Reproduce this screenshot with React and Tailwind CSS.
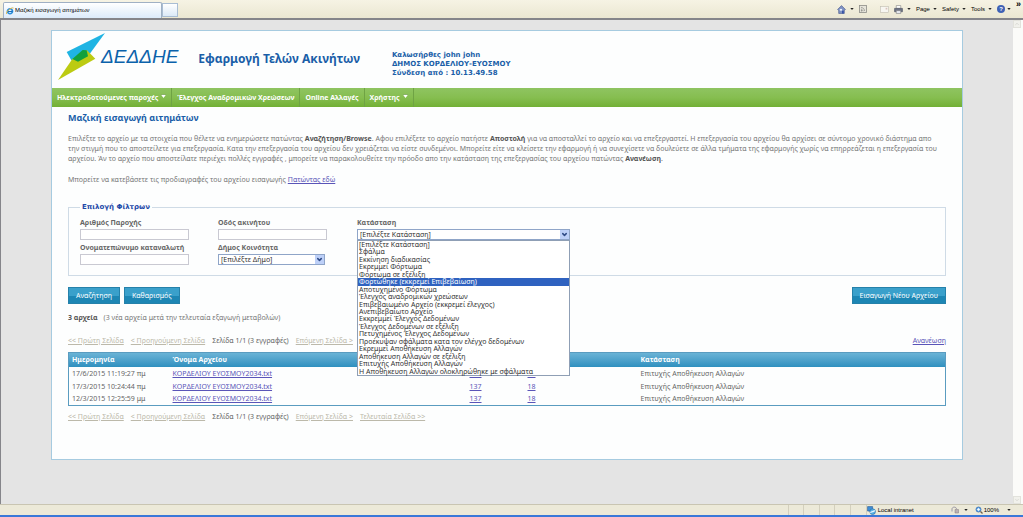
import React from "react";
import { ChevronDown } from "lucide-react";

const menuItems = [
  { label: "Ηλεκτροδοτούμενες παροχές", arrow: true },
  { label: "Έλεγχος Αναδρομικών Χρεώσεων" },
  { label: "Online Αλλαγές" },
  { label: "Χρήστης", arrow: true },
];

const statuses = [
  "[Επιλέξτε Κατάσταση]",
  "Σφάλμα",
  "Εκκίνηση διαδικασίας",
  "Εκρεμμεί Φόρτωμα",
  "Φόρτωμα σε εξέλιξη",
  "Φορτώθηκε (εκκρεμεί Επιβεβαίωση)",
  "Αποτυχημένο Φόρτωμα",
  "Έλεγχος αναδρομικών χρεώσεων",
  "Επιβεβαιωμένο Αρχείο (εκκρεμεί έλεγχος)",
  "Ανεπιβεβαίωτο Αρχείο",
  "Εκκρεμμεί Έλεγχος Δεδομένων",
  "Έλεγχος Δεδομένων σε εξέλιξη",
  "Πετυχημένος Έλεγχος Δεδομένων",
  "Προέκυψαν σφάλματα κατα τον ελέγχο δεδομένων",
  "Εκρεμμεί Αποθήκευση Αλλαγών",
  "Αποθήκευση Αλλαγών σε εξέλιξη",
  "Επιτυχής Αποθήκευση Αλλαγών",
  "Η Αποθήκευση Αλλαγών ολοκληρώθηκε με σφάλματα",
];

const files = [
  { date: "17/6/2015 11:19:27 πμ", name: "ΚΟΡΔΕΛΙΟΥ ΕΥΟΣΜΟΥ2034.txt", total: 137, errors: 18 },
  { date: "17/3/2015 10:24:44 πμ", name: "ΚΟΡΔΕΛΙΟΥ ΕΥΟΣΜΟΥ2034.txt", total: 137, errors: 18 },
  { date: "12/3/2015 12:25:59 μμ", name: "ΚΟΡΔΕΛΙΟΥ ΕΥΟΣΜΟΥ2034.txt", total: 137, errors: 18 },
];

function Caret() {
  return (
    <svg viewBox="0 0 5 3" className="h-[2px] w-[4px]" aria-hidden="true">
      <path d="M0 0h5L2.5 3z" fill="#222" />
    </svg>
  );
}

function IeLogo() {
  return (
    <svg viewBox="0 0 16 16" className="h-2 w-2 shrink-0" aria-hidden="true">
      <circle cx="8" cy="8.5" r="5" fill="#fff" stroke="#2b8fdc" strokeWidth="3.4" />
      <path d="M4 9h9" stroke="#1b6fc0" strokeWidth="2.4" />
      <path d="M1 14C-1 10 10 0 15 2" fill="none" stroke="#e3b53a" strokeWidth="1.8" />
    </svg>
  );
}

function TabBar() {
  return (
    <header className="flex h-[18px] items-stretch bg-linear-to-b from-[#f6f3e4] to-[#ebe7d2] font-['Liberation_Sans',sans-serif] text-[6px] text-black">
      <div className="mt-[2px] ml-[3px] flex w-[159px] items-center gap-[1px] rounded-t-xs border border-b-0 border-[#9fb0c4] bg-linear-to-b from-white to-[#dcebfa] px-[2px]">
        <IeLogo />
        <span>Μαζική εισαγωγή αιτημάτων</span>
      </div>
      <button
        type="button"
        aria-label="New tab"
        className="mt-[3px] mb-[1px] w-4 border border-[#a9bdd4] bg-linear-to-b from-white to-[#dbe9f8]"
      />
      <div className="ml-auto flex items-center gap-[5px] pr-[2px]">
        <button type="button" aria-label="Home" className="flex items-center gap-1">
          <svg viewBox="0 0 16 16" className="h-[9px] w-[9px]">
            <path d="M1 8L8 1l7 7-2 1v6H3V9z" fill="#7f93c4" stroke="#3d4f86" />
            <path d="M5 7h4v3H5z" fill="#e9effc" />
            <path d="M9 10h3v5H9z" fill="#3450a4" />
          </svg>
          <Caret />
        </button>
        <button type="button" aria-label="Feeds">
          <svg viewBox="0 0 16 16" className="h-2 w-2">
            <rect x="1" y="1" width="14" height="14" fill="#e6e4da" stroke="#8d8d88" strokeWidth="1.6" />
            <path d="M4 5c4 0 7 3 7 7M4 8.500c2 0 4 2 4 4" fill="none" stroke="#8d8d88" strokeWidth="1.5" />
            <circle cx="5" cy="11.500" r="1.300" fill="#8d8d88" />
          </svg>
        </button>
        <button type="button" aria-label="Read mail" className="ml-2">
          <svg viewBox="0 0 16 12" className="h-[7px] w-[9px]">
            <rect x="1" y="1" width="14" height="10" fill="#f7f6f1" stroke="#bdbab0" />
            <path d="M10 3h3v3h-3z" fill="#d8c2ba" />
          </svg>
        </button>
        <button type="button" aria-label="Print" className="flex items-center gap-1">
          <svg viewBox="0 0 16 16" className="h-[9px] w-[9px]">
            <path d="M4 1h8v5H4z" fill="#fff" stroke="#777" />
            <path d="M1 6h14v6H1z" fill="#6d7384" stroke="#454b5b" />
            <path d="M4 10h8v5H4z" fill="#e9ecf3" stroke="#777" />
          </svg>
          <Caret />
        </button>
        {["Page", "Safety", "Tools"].map((name) => (
          <button key={name} type="button" className="flex items-center gap-[3px]">
            {name}
            <Caret />
          </button>
        ))}
        <button type="button" aria-label="Help" className="flex items-center gap-[2px]">
          <span className="flex h-2 w-2 items-center justify-center rounded-full bg-[#3f62b5] leading-none font-bold text-white">
            ?
          </span>
          <Caret />
        </button>
        <span className="self-start text-[9px] leading-[8px] font-bold">»</span>
      </div>
    </header>
  );
}

function Brand() {
  return (
    <div className="flex items-center">
      <svg viewBox="0 0 144 141" className="h-[47px] w-12" aria-hidden="true">
        <path d="M141 0L26 57 40 82 90 70z" fill="#1fb4e3" />
        <path d="M0 141L43 78 86 51l26 26z" fill="#bccb12" />
        <path d="M43 78L74 51 86 52 90 70 60 86z" fill="#12a03c" />
      </svg>
      <span className="-ml-[5px] font-['Liberation_Sans',sans-serif] text-[19px] leading-6 text-[#0b62ab] italic">ΔΕΔΔΗΕ</span>
    </div>
  );
}

function MainMenu() {
  return (
    <nav className="flex h-[19px] bg-linear-to-b from-[#8fc461] via-[#86be50] to-[#72b035] text-[7px] font-bold text-white">
      {menuItems.map((item) => (
        <a key={item.label} href="#" className="flex items-center gap-[3px] border-r border-[#6fa344] px-[5px]">
          {item.label}
          {item.arrow && (
            <svg viewBox="0 0 6 5" className="mb-[3px] h-[4px] w-[5px]" aria-hidden="true">
              <path d="M0 0h6v1H0z" fill="#5c8f35" />
              <path d="M0 1h6L3 5z" fill="#fff" />
            </svg>
          )}
        </a>
      ))}
    </nav>
  );
}

function TextField({ id, label }) {
  return (
    <div>
      <label htmlFor={id} className="block font-bold text-[#666]">
        {label}
      </label>
      <input id={id} type="text" className="mt-[2px] block h-[11px] w-[109px] border border-[#c9c9d2] bg-white px-[2px]" />
    </div>
  );
}

function SelectField({ id, label, options, width, children }) {
  return (
    <div>
      <label htmlFor={id} className="block font-bold text-[#666]">
        {label}
      </label>
      <div className={`relative mt-[2px] ${width}`}>
        <select
          id={id}
          className="block h-[11px] w-full appearance-none border border-[#8fa5c8] bg-white px-[2px] leading-[9px] text-[#333]"
        >
          {options.map((option) => (
            <option key={option}>{option}</option>
          ))}
        </select>
        <span className="pointer-events-none absolute top-[1px] right-[1px] flex h-[9px] w-[9px] items-center justify-center bg-[#bdd0f8]">
          <ChevronDown className="h-[7px] w-[7px] text-[#2e4a86]" strokeWidth={5} />
        </span>
        {children}
      </div>
    </div>
  );
}

function StatusList() {
  return (
    <ul
      role="listbox"
      aria-label="Κατάσταση"
      className="absolute top-full left-0 z-10 grid h-[136px] w-full auto-rows-fr border border-[#8f9fb5] bg-white leading-[7px] whitespace-nowrap text-[#333]"
    >
      {statuses.map((status, i) => (
        <li
          key={status}
          role="option"
          aria-selected={i === 5}
          className={`px-[1px] ${i === 5 ? "bg-[#2f62c0] text-white" : ""}`}
        >
          {status}
        </li>
      ))}
    </ul>
  );
}

function Filters() {
  return (
    <fieldset className="mt-[18px] border border-[#cfdbe6] px-[11px] pb-[10px]">
      <legend className="px-[2px] font-['DejaVu_Sans',sans-serif] font-bold text-[#1d49a8]">Επιλογή Φίλτρων</legend>
      <div className="mt-[6px] grid grid-cols-[138px_139px_auto] justify-start gap-y-[3px]">
        <TextField id="supply" label="Αριθμός Παροχής" />
        <TextField id="street" label="Οδός ακινήτου" />
        <SelectField id="status" label="Κατάσταση" options={statuses} width="w-[213px]">
          <StatusList />
        </SelectField>
        <TextField id="consumer" label="Ονοματεπώνυμο καταναλωτή" />
        <SelectField id="municipality" label="Δήμος Κοινότητα" options={["[Επιλέξτε Δήμο]"]} width="w-[107px]" />
      </div>
    </fieldset>
  );
}

function ActionButton({ children }) {
  return (
    <button
      type="button"
      className="h-[17px] border border-[#2581aa] bg-linear-to-b from-[#3aa0cb] from-50% to-[#1d86b4] to-50% px-[7px] text-white"
    >
      {children}
    </button>
  );
}

function Pager() {
  return (
    <div className="flex gap-[7px] leading-[10px] text-[#666]">
      <a href="#" className="text-[#bcb9aa] underline">&lt;&lt; Πρώτη Σελίδα</a>
      <a href="#" className="text-[#bcb9aa] underline">&lt; Προηγούμενη Σελίδα</a>
      <span>Σελίδα 1/1 (3 εγγραφές)</span>
      <a href="#" className="text-[#bcb9aa] underline">Επόμενη Σελίδα &gt;</a>
      <a href="#" className="text-[#bcb9aa] underline">Τελευταία Σελίδα &gt;&gt;</a>
    </div>
  );
}

function FilesTable() {
  return (
    <table className="mt-[6px] mb-[6px] w-full table-fixed border border-[#5a9cc0] text-left text-[#666]">
      <thead className="h-[14px] bg-linear-to-b from-[#6ab3d6] to-[#2e90bf] text-white">
        <tr>
          <th className="w-[101px] px-[3px]">Ημερομηνία</th>
          <th className="w-[297px] px-[3px]">Όνομα Αρχείου</th>
          <th className="w-[58px] px-[3px]">Εγγραφές</th>
          <th className="w-[113px] px-[3px]">Σφάλματα</th>
          <th className="px-[3px]">Κατάσταση</th>
        </tr>
      </thead>
      <tbody>
        {files.map((file) => (
          <tr key={file.date} className="h-[13px]">
            <td className="px-[3px]">{file.date}</td>
            <td className="px-[3px]">
              <a href="#" className="text-[#5a55b8] underline">{file.name}</a>
            </td>
            <td className="px-[3px]">
              <a href="#" className="text-[#5a55b8] underline">{file.total}</a>
            </td>
            <td className="px-[3px]">
              <a href="#" className="text-[#5a55b8] underline">{file.errors}</a>
            </td>
            <td className="px-[3px]">Επιτυχής Αποθήκευση Αλλαγών</td>
          </tr>
        ))}
      </tbody>
    </table>
  );
}

function StatusBar() {
  return (
    <footer className="flex h-[13px] items-center justify-end border-t border-b-2 border-[#c9c5b2] border-b-[#3a78d8] bg-[#ece9d8] font-['Liberation_Sans',sans-serif] text-[6px] text-black">
      <div className="flex h-full w-[79px] justify-between">
        {[1, 2, 3, 4, 5, 6].map((n) => (
          <span key={n} className="border-l border-[#d3cfbd]" />
        ))}
      </div>
      <div className="flex w-[84px] items-center gap-[2px]">
        <svg viewBox="0 0 16 16" className="h-[9px] w-[9px]" aria-hidden="true">
          <path d="M1 1h9v8H1z" fill="#3f8fd8" stroke="#24548f" />
          <circle cx="10" cy="10" r="5" fill="#58b4e6" stroke="#1e5b9a" />
          <path d="M6 12c3-3 5-1 8-4" fill="none" stroke="#e7f4ff" strokeWidth="2" />
        </svg>
        Local intranet
      </div>
      <div className="flex w-6 items-center gap-[5px]">
        <svg viewBox="0 0 16 16" className="h-2 w-2" aria-hidden="true">
          <path d="M2 11V6c0-5 9-5 9 0" fill="none" stroke="#9a97a5" strokeWidth="2" />
          <path d="M8 7h7v7H8z" fill="#bdb2b2" stroke="#827b82" />
        </svg>
        <Caret />
      </div>
      <button type="button" className="flex items-center gap-[1px]">
        <svg viewBox="0 0 16 16" className="h-2 w-2" aria-hidden="true">
          <circle cx="7" cy="7" r="5" fill="#6fb1ec" stroke="#2b64ad" strokeWidth="1.500" />
          <path d="M4 7h6M7 4v6" stroke="#fff" strokeWidth="1.500" />
          <path d="M11 11l4 4" stroke="#6d5f4a" strokeWidth="2.500" />
        </svg>
        100%
        <span className="ml-[7px]">
          <Caret />
        </span>
      </button>
      <span className="w-3" />
    </footer>
  );
}

function App() {
  return (
    <div className="flex min-h-screen flex-col bg-[#e4e4e4] font-['Noto_Sans',sans-serif] text-[7px] leading-[9px]">
      <TabBar />
      <div className="flex flex-1 border-t-2 border-l border-[#85858a]">
        <main className="min-w-0 flex-1 px-[50px] pt-[10px] pb-[44px]">
          <div className="border border-[#a6cbe0] bg-[#fdfefe] pb-[37px]">
            <div className="flex h-[57px] items-start pt-[2px] pl-[6px]">
              <Brand />
              <h1 className="mt-[18px] ml-5 text-[12px] leading-4 font-bold text-[#1a5ea8]">Εφαρμογή Τελών Ακινήτων</h1>
              <p className="mt-[18px] ml-8 font-['DejaVu_Sans',sans-serif] text-[7px] leading-[9px] font-bold text-[#1a5ea8]">
                Καλωσήρθες john john
                <br />
                ΔΗΜΟΣ ΚΟΡΔΕΛΙΟΥ-ΕΥΟΣΜΟΥ
                <br />
                Σύνδεση από : 10.13.49.58
              </p>
            </div>
            <MainMenu />
            <div className="px-4 pt-[5px] text-[#777]">
              <h2 className="text-[9px] leading-3 font-bold text-[#1a5ea8]">Μαζική εισαγωγή αιτημάτων</h2>
              <p className="mt-[10px] pr-[5px] leading-[10px]">
                Επιλέξτε το αρχείο με τα στοιχεία που θέλετε να ενημερώσετε πατώντας <b className="text-[#555]">Αναζήτηση/Browse</b>. Αφου
                επιλέξετε το αρχείο πατήστε <b className="text-[#555]">Αποστολή</b> για να αποσταλλεί το αρχείο και να επεξεργαστεί. Η
                επεξεργασία του αρχείου θα αρχίσει σε σύντομο χρονικό διάστημα απο την στιγμή που το αποστείλετε για επεξεργασία. Κατα
                την επεξεργασία του αρχείου δεν χρειάζεται να είστε συνδεμένοι. Μπορείτε είτε να κλείσετε την εφαρμογή ή να συνεχίσετε
                να δουλεύετε σε άλλα τμήματα της εφαρμογής χωρίς να επηρρεάζεται η επεξεργασία του αρχείου. Άν το αρχείο που
                αποστείλατε περιέχει πολλές εγγραφές , μπορείτε να παρακολουθείτε την πρόοδο απο την κατάσταση της επεξεργασίας του
                αρχείου πατώντας <b className="text-[#555]">Ανανέωση</b>.
              </p>
              <p className="mt-[11px] leading-[10px]">
                Μπορείτε να κατεβάσετε τις προδιαγραφές του αρχείου εισαγωγής{" "}
                <a href="#" className="text-[#5a55b8] underline">Πατώντας εδώ</a>
              </p>
              <Filters />
              <div className="mt-[11px] flex gap-1">
                <ActionButton>Αναζήτηση</ActionButton>
                <ActionButton>Καθαρισμός</ActionButton>
                <div className="ml-auto">
                  <ActionButton>Εισαγωγή Νέου Αρχείου</ActionButton>
                </div>
              </div>
              <p className="mt-[9px] mb-[13px] leading-[10px]">
                <b className="mr-[6px] text-[#555]">3 αρχεία</b>(3 νέα αρχεία μετά την τελευταία εξαγωγή μεταβολών)
              </p>
              <div className="flex justify-between">
                <Pager />
                <a href="#" className="leading-[10px] text-[#5a55b8] underline">Ανανέωση</a>
              </div>
              <FilesTable />
              <Pager />
            </div>
          </div>
        </main>
        <div className="flex w-[10px] flex-col justify-between bg-[#fbfbf9] text-[#c4c4be]" aria-hidden="true">
          <ChevronDown className="h-2 w-2 rotate-180 border border-[#e2e2dc] bg-[#f1f1ec]" />
          <ChevronDown className="h-2 w-2 border border-[#e2e2dc] bg-[#f1f1ec]" />
        </div>
      </div>
      <StatusBar />
    </div>
  );
}

export default App;
